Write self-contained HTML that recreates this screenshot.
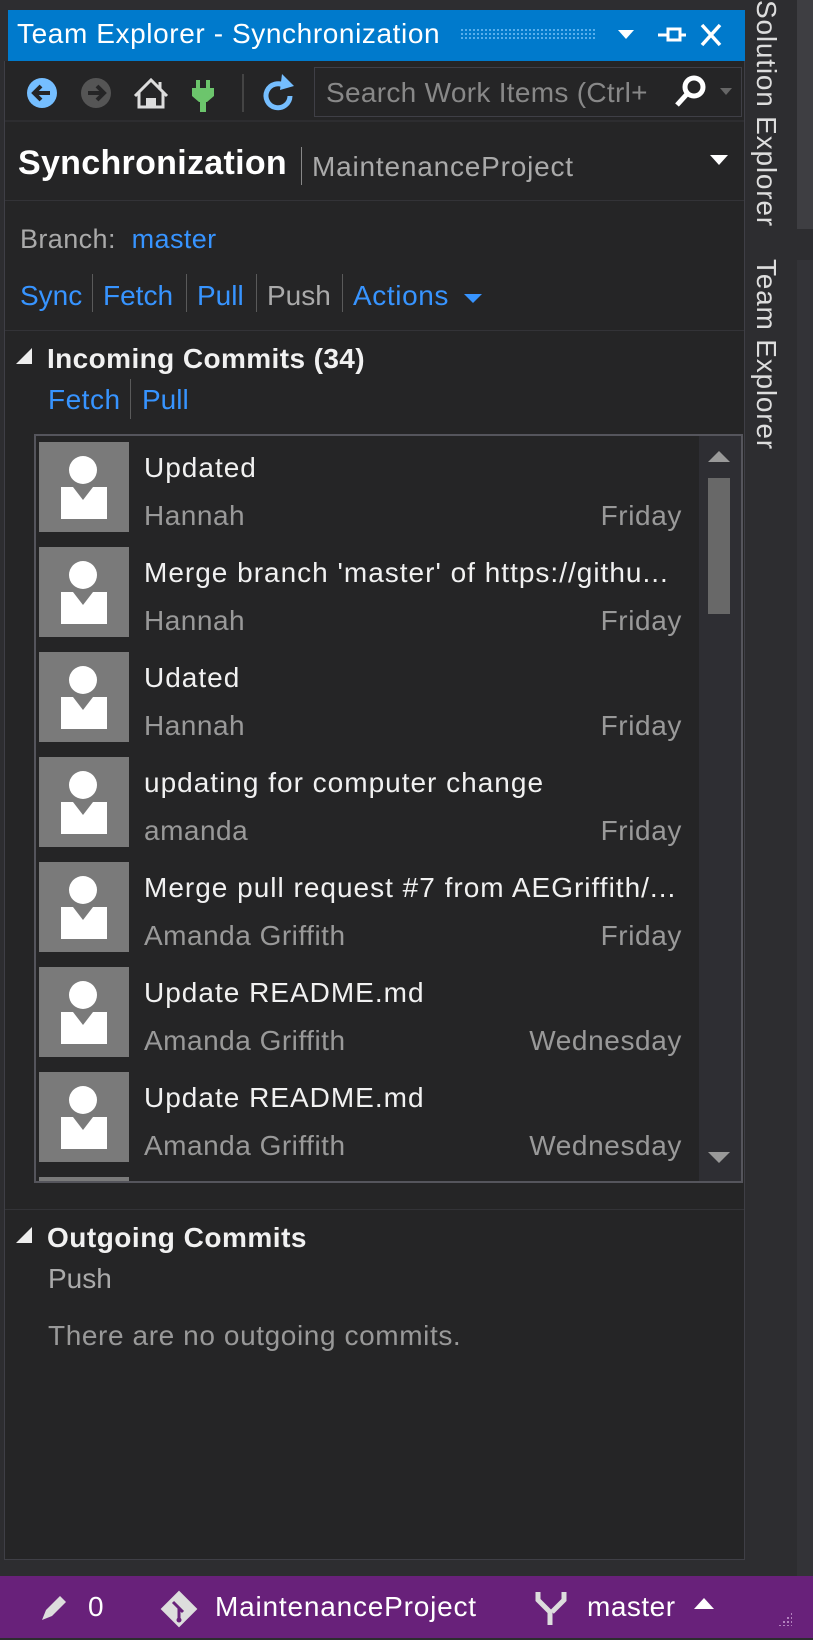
<!DOCTYPE html>
<html><head><meta charset="utf-8"><style>
*{margin:0;padding:0;box-sizing:border-box}
body{width:813px;height:1640px;background:#2d2d30;position:relative;overflow:hidden;font-family:"Liberation Sans",sans-serif;color:#f1f1f1}
.a{position:absolute;white-space:nowrap}
.lk{color:#3794ff}
.g{color:#999}
.sep{position:absolute;width:1px;background:#5a5a5a}
.item{position:absolute;left:39px;width:650px;height:100px}
.item .t{position:absolute;left:105px;top:10px;font-size:28px;letter-spacing:1px;color:#f1f1f1}
.item .s{position:absolute;left:105px;top:58px;font-size:28px;letter-spacing:0.5px;color:#999}
.item .d{position:absolute;right:7px;top:58px;font-size:28px;letter-spacing:0.6px;color:#999}
</style></head><body>
<div class="a" style="left:8px;top:10px;width:737px;height:51px;background:#007acc"></div>
<div class="a" style="left:17px;top:18px;font-size:28px;letter-spacing:0.6px;color:#fff">Team Explorer - Synchronization</div>
<div class="a" style="left:460px;top:28px;width:137px;height:12px;background-image:radial-gradient(circle,#5fb3ee 1px,transparent 1.2px);background-size:4px 4px"></div>
<svg class="a" style="left:612px;top:20px" width="120" height="30"><polygon points="6,10 22,10 14,19" fill="#fff"/><path d="M46 15h10M56 9h12v11h-12zM68 15h6" stroke="#fff" stroke-width="3" fill="none"/><path d="M90 5l18 20M108 5l-18 20" stroke="#fff" stroke-width="3.5"/></svg>
<div class="a" style="left:4px;top:61px;width:741px;height:1499px;background:#252526;border-left:1px solid #3f3f46;border-right:1px solid #3f3f46;border-bottom:1px solid #3f3f46"></div>
<svg class="a" style="left:20px;top:70px" width="290" height="48">
<circle cx="22" cy="23" r="15" fill="#75beff"/><path d="M30 23H15M21 16l-7 7 7 7" stroke="#252526" stroke-width="4" fill="none"/>
<circle cx="76" cy="23" r="15" fill="#555"/><path d="M68 23h15M77 16l7 7-7 7" stroke="#252526" stroke-width="4" fill="none"/>
<path d="M115 26l16-16 16 16M119 22v15h24V22M140 12v8" stroke="#ddd" stroke-width="3" fill="none"/><rect x="126" y="28" width="10" height="9" fill="#ddd"/>
<rect x="176" y="10" width="4" height="9" fill="#6cc56c"/><rect x="186" y="10" width="4" height="9" fill="#6cc56c"/><path d="M172 18h22v8l-7 6h-8l-7-6z" fill="#6cc56c"/><rect x="180" y="31" width="6" height="11" fill="#6cc56c"/>
<line x1="223" y1="4" x2="223" y2="42" stroke="#444" stroke-width="2"/>
<path d="M265 16a12 12 0 1 0 5 10" stroke="#75beff" stroke-width="5" fill="none"/><polygon points="262,4 274,16 260,20" fill="#75beff"/>
</svg>
<div class="a" style="left:314px;top:67px;width:428px;height:50px;border:1px solid #3f3f46;background:#252526"></div>
<div class="a" style="left:326px;top:77px;font-size:28px;letter-spacing:0.3px;color:#888">Search Work Items (Ctrl+</div>
<svg class="a" style="left:672px;top:72px" width="70" height="40"><circle cx="22" cy="15" r="9" stroke="#fff" stroke-width="5" fill="none"/><path d="M15 22L5 33" stroke="#fff" stroke-width="5"/><polygon points="48,16 60,16 54,23" fill="#666"/></svg>
<div class="a" style="left:5px;top:120px;width:739px;height:2px;background:#2d2d30"></div>
<div class="a" style="left:18px;top:144px;font-size:34px;font-weight:bold;letter-spacing:0.3px;color:#fff">Synchronization</div>
<div class="sep" style="left:301px;top:147px;height:38px;background:#888"></div>
<div class="a" style="left:312px;top:151px;font-size:28px;letter-spacing:0.8px;color:#aaa">MaintenanceProject</div>
<svg class="a" style="left:708px;top:153px" width="22" height="14"><polygon points="2,2 20,2 11,12" fill="#fff"/></svg>
<div class="a" style="left:5px;top:200px;width:739px;height:1px;background:#333337"></div>
<div class="a g" style="left:20px;top:224px;font-size:27px;letter-spacing:0.4px;color:#aaa">Branch:&nbsp; <span class="lk">master</span></div>
<div class="a" style="left:20px;top:280px;font-size:28px"><span class="lk">Sync</span></div>
<div class="sep" style="left:92px;top:274px;height:38px"></div>
<div class="a lk" style="left:103px;top:280px;font-size:28px">Fetch</div>
<div class="sep" style="left:186px;top:274px;height:38px"></div>
<div class="a lk" style="left:197px;top:280px;font-size:28px">Pull</div>
<div class="sep" style="left:256px;top:274px;height:38px"></div>
<div class="a" style="left:267px;top:280px;font-size:28px;color:#aaa">Push</div>
<div class="sep" style="left:342px;top:274px;height:38px"></div>
<div class="a lk" style="left:353px;top:280px;font-size:28px;letter-spacing:0.6px">Actions</div>
<svg class="a" style="left:462px;top:292px" width="22" height="14"><polygon points="2,2 20,2 11,11" fill="#3794ff"/></svg>
<div class="a" style="left:5px;top:330px;width:739px;height:1px;background:#333337"></div>
<svg class="a" style="left:14px;top:346px" width="20" height="20"><polygon points="18,2 18,18 2,18" fill="#eee"/></svg>
<div class="a" style="left:47px;top:343px;font-size:28px;font-weight:bold;letter-spacing:0.4px">Incoming Commits (34)</div>
<div class="a lk" style="left:48px;top:384px;font-size:28px;letter-spacing:0.5px">Fetch</div>
<div class="sep" style="left:130px;top:379px;height:40px"></div>
<div class="a lk" style="left:142px;top:384px;font-size:28px">Pull</div>
<div class="a" style="left:34px;top:434px;width:709px;height:749px;border:2px solid #55555c;background:#252526;overflow:hidden"></div>
<div class="a" style="left:699px;top:436px;width:42px;height:745px;background:#2e2e33"></div>
<svg class="a" style="left:706px;top:448px" width="26" height="16"><polygon points="2,14 24,14 13,3" fill="#999"/></svg>
<div class="a" style="left:708px;top:478px;width:22px;height:136px;background:#686868"></div>
<svg class="a" style="left:706px;top:1150px" width="26" height="16"><polygon points="2,2 24,2 13,13" fill="#999"/></svg>
<div class="a" style="left:36px;top:436px;width:663px;height:745px;overflow:hidden">
<svg width="0" height="0" style="position:absolute"><defs><g id="av"><rect width="90" height="90" fill="#7a7a7a"/><circle cx="44" cy="28" r="14" fill="#fff"/><rect x="22" y="45" width="46" height="32" fill="#fff"/><polygon points="34,45 54,45 44,58" fill="#7a7a7a"/></g></defs></svg>
<div class="item" style="left:3px;top:6px"><svg width="90" height="90"><use href="#av"/></svg><div class="t">Updated</div><div class="s">Hannah</div><div class="d">Friday</div></div>
<div class="item" style="left:3px;top:111px"><svg width="90" height="90"><use href="#av"/></svg><div class="t">Merge branch 'master' of https://githu...</div><div class="s">Hannah</div><div class="d">Friday</div></div>
<div class="item" style="left:3px;top:216px"><svg width="90" height="90"><use href="#av"/></svg><div class="t">Udated</div><div class="s">Hannah</div><div class="d">Friday</div></div>
<div class="item" style="left:3px;top:321px"><svg width="90" height="90"><use href="#av"/></svg><div class="t">updating for computer change</div><div class="s">amanda</div><div class="d">Friday</div></div>
<div class="item" style="left:3px;top:426px"><svg width="90" height="90"><use href="#av"/></svg><div class="t">Merge pull request #7 from AEGriffith/...</div><div class="s">Amanda Griffith</div><div class="d">Friday</div></div>
<div class="item" style="left:3px;top:531px"><svg width="90" height="90"><use href="#av"/></svg><div class="t">Update README.md</div><div class="s">Amanda Griffith</div><div class="d">Wednesday</div></div>
<div class="item" style="left:3px;top:636px"><svg width="90" height="90"><use href="#av"/></svg><div class="t">Update README.md</div><div class="s">Amanda Griffith</div><div class="d">Wednesday</div></div>
<div class="item" style="left:3px;top:741px"><svg width="90" height="90"><use href="#av"/></svg></div>
</div>
<div class="a" style="left:5px;top:1209px;width:739px;height:1px;background:#333337"></div>
<svg class="a" style="left:14px;top:1225px" width="20" height="20"><polygon points="18,2 18,18 2,18" fill="#eee"/></svg>
<div class="a" style="left:47px;top:1222px;font-size:28px;font-weight:bold;letter-spacing:0.5px">Outgoing Commits</div>
<div class="a" style="left:48px;top:1263px;font-size:28px;color:#aaa">Push</div>
<div class="a" style="left:48px;top:1320px;font-size:28px;letter-spacing:0.6px;color:#999">There are no outgoing commits.</div>
<div class="a" style="left:797px;top:0;width:16px;height:229px;background:#3e3e42"></div>
<div class="a" style="left:797px;top:260px;width:16px;height:1316px;background:#333337"></div>
<div class="a" style="left:750px;top:0;font-size:28px;letter-spacing:0.8px;color:#ddd;transform-origin:0 0;transform:translate(32px,0px) rotate(90deg)">Solution Explorer</div>
<div class="a" style="left:750px;top:0;font-size:28px;letter-spacing:0.8px;color:#ddd;transform-origin:0 0;transform:translate(32px,259px) rotate(90deg)">Team Explorer</div>
<div class="a" style="left:0;top:1576px;width:813px;height:62px;background:#68217a"></div>
<svg class="a" style="left:36px;top:1590px" width="40" height="36"><path d="M6 30l4-10 14-14 6 6-14 14z" fill="#ddd"/></svg>
<div class="a" style="left:88px;top:1591px;font-size:28px;color:#fff">0</div>
<svg class="a" style="left:158px;top:1588px" width="42" height="42"><rect x="8" y="8" width="26" height="26" transform="rotate(45 21 21)" fill="#ddd"/><path d="M15 14l10 10M21 20v12" stroke="#68217a" stroke-width="3"/><circle cx="21" cy="32" r="2.5" fill="#68217a"/></svg>
<div class="a" style="left:215px;top:1591px;font-size:28px;letter-spacing:0.8px;color:#fff">MaintenanceProject</div>
<svg class="a" style="left:530px;top:1588px" width="42" height="40"><path d="M8 4v8l12 12v13M34 4v8L22 24" stroke="#ddd" stroke-width="5" fill="none"/></svg>
<div class="a" style="left:587px;top:1591px;font-size:28px;letter-spacing:0.5px;color:#fff">master</div>
<svg class="a" style="left:692px;top:1596px" width="24" height="16"><polygon points="2,13 22,13 12,2" fill="#fff"/></svg>
<div class="a" style="left:778px;top:1612px;width:14px;height:14px;background-image:radial-gradient(circle,#b98ac4 1px,transparent 1.2px);background-size:4px 4px;clip-path:polygon(100% 0,100% 100%,0 100%)"></div>
</body></html>
